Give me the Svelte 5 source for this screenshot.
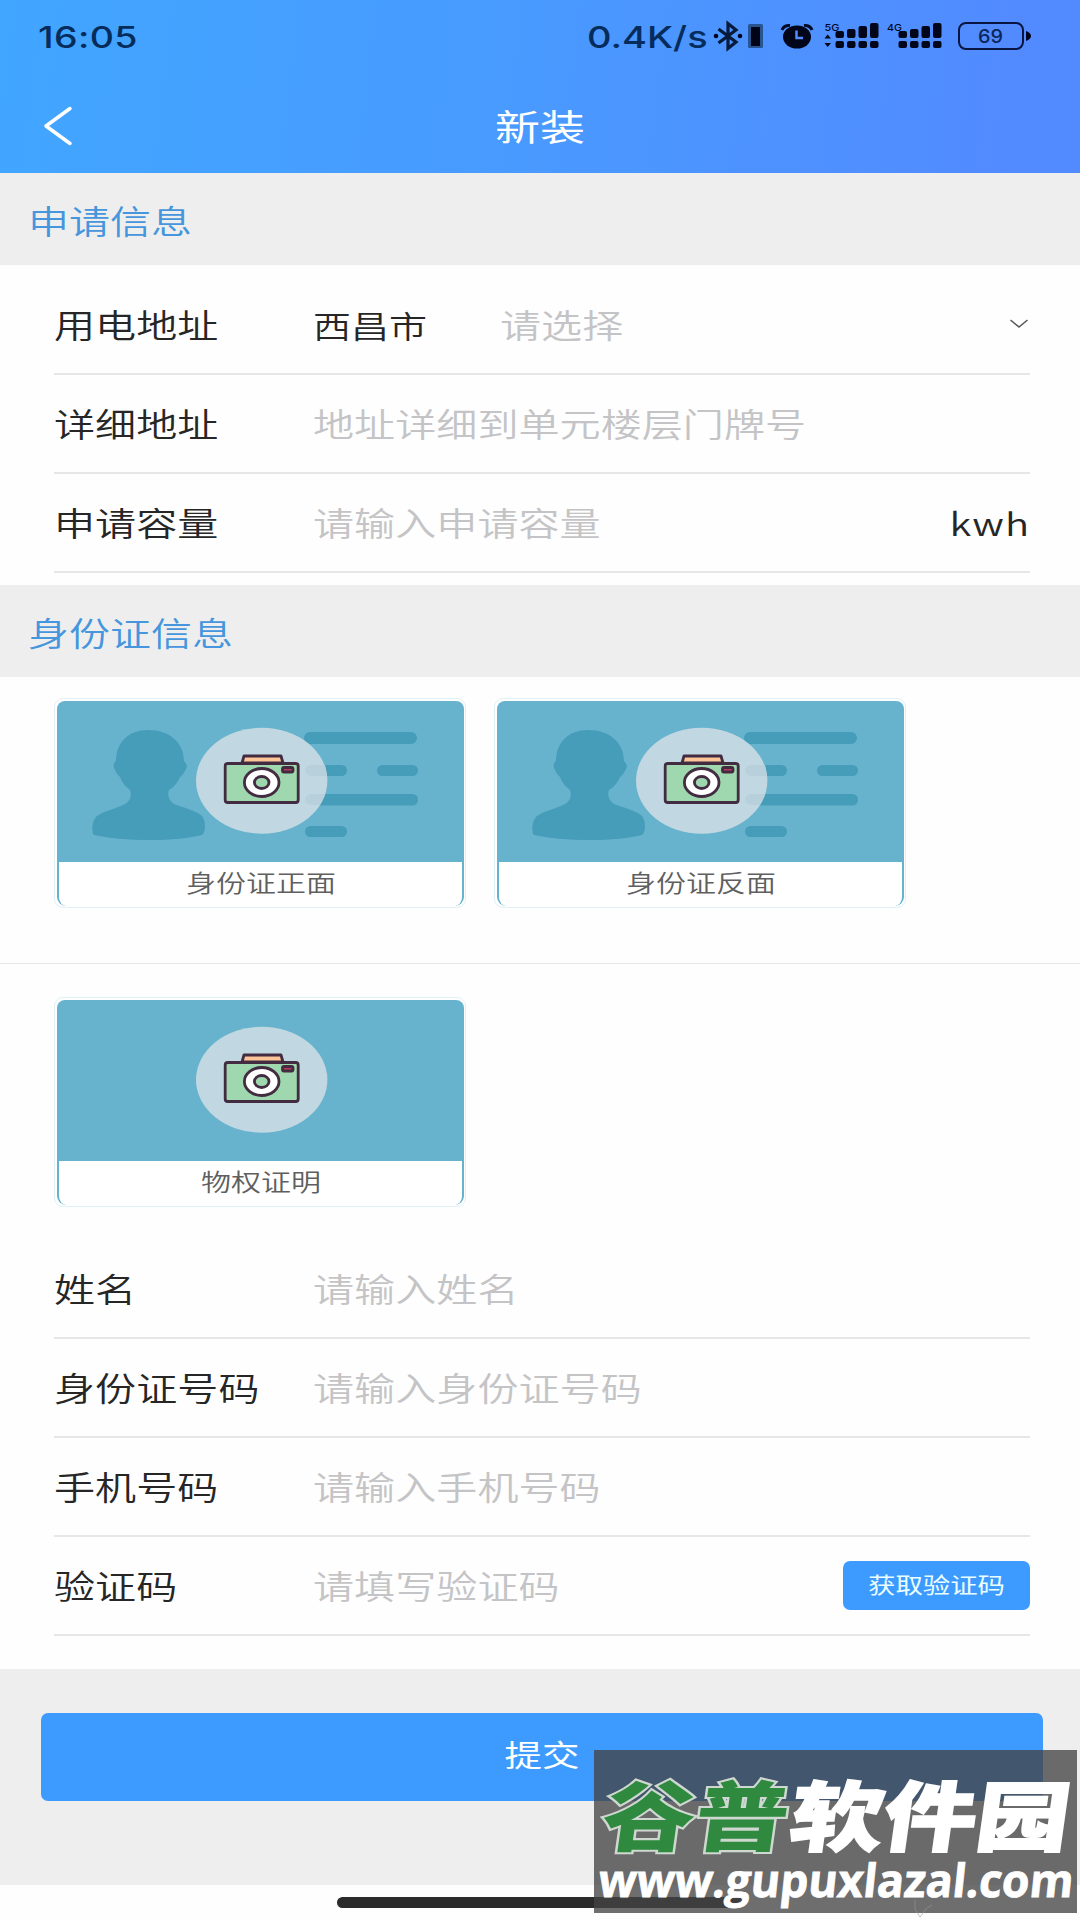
<script lang="ts">
    type Field = {
        key: string;
        label: string;
        placeholder: string;
        unit?: string;
        code?: boolean;
    }

    let city: string = "西昌市";
    let form: Record<string, string> = {};

    const addressFields: Field[] = [
        { key: "address", label: "详细地址", placeholder: "地址详细到单元楼层门牌号" },
        { key: "capacity", label: "申请容量", placeholder: "请输入申请容量", unit: "kwh" },
    ];

    const personFields: Field[] = [
        { key: "name", label: "姓名", placeholder: "请输入姓名" },
        { key: "idNumber", label: "身份证号码", placeholder: "请输入身份证号码" },
        { key: "phone", label: "手机号码", placeholder: "请输入手机号码" },
        { key: "code", label: "验证码", placeholder: "请填写验证码", code: true },
    ];

    const signalBars = [
        { x: 0, y: 31 },
        { x: 11.5, y: 29 },
        { x: 23, y: 26 },
        { x: 34.5, y: 23 },
    ];
</script>

{#snippet signal(left: number)}
    {#each signalBars as bar}
        <rect x={left + bar.x} y={bar.y} width="8.5" height={38 - bar.y} rx="2" />
        <rect x={left + bar.x} y="41" width="8.5" height="7" rx="2" />
    {/each}
{/snippet}

{#snippet uploadCard(caption: string, person: boolean)}
    <button class="card">
        <svg class="cardArt" viewBox="0 0 407 161" width="407" height="161">
            {#if person}
                <g fill="#469db9">
                    <path d="M91 29C72 29 59 41 59 60C56 62 56 66 58 69C59 72 61 74 63 76C65 82 69 86 73 89C75 95 73 100 68 103C61 107 47 110 40 115C35 119 34 131 37 134C50 137 72 139 93 139C113 139 134 137 145 134C149 131 149 120 145 115C140 110 125 106 117 103C112 100 110 94 112 89C117 86 121 81 123 76C125 75 127 72 129 68C131 65 129 62 127 60C127 41 112 29 91 29Z" />
                    <rect x="247" y="31" width="113" height="12" rx="6" />
                    <rect x="248" y="64" width="42" height="11" rx="5.5" />
                    <rect x="320" y="64" width="41" height="11" rx="5.5" />
                    <rect x="248" y="93" width="113" height="11.500" rx="5.5" />
                    <rect x="248" y="125" width="42" height="11" rx="5.5" />
                </g>
            {/if}
            <ellipse cx="204.700" cy="79.700" rx="65.700" ry="53" fill="#c1d7e1" />
            {#if person}
                <g fill="#b7d0db">
                    <path d="M254 64H268L270 75H254Q248 74 248 69Q249 65 254 64Z" />
                    <path d="M254 93H268L263 104H254Q248 103 248 98Q249 94 254 93Z" />
                </g>
            {/if}
            <g stroke="#432c42" stroke-width="2.800" stroke-linejoin="round">
                <path d="M185 62L187 55H224L226 62Z" fill="#fcc598" />
                <rect x="168.200" y="62.500" width="73" height="39" rx="2.500" fill="#9fd7ae" />
                <ellipse cx="204.700" cy="81.500" rx="17.300" ry="14" fill="#fff" />
                <ellipse cx="204.700" cy="81.500" rx="7.300" ry="6" fill="#9fd7ae" />
                <rect x="225.500" y="66.500" width="10.500" height="4.500" rx="1.500" fill="#b93a5c" />
            </g>
        </svg>
        <span class="caption"><span class="flat">{caption}</span></span>
    </button>
{/snippet}

{#snippet fieldRow(field: Field)}
    <label class="row">
        <span class="label flat">{field.label}</span>
        <input class="flat" type="text" placeholder={field.placeholder} bind:value={form[field.key]} />
        {#if field.unit}
            <span class="unit flat">{field.unit}</span>
        {/if}
        {#if field.code}
            <button class="codeButton"><span class="flat">获取验证码</span></button>
        {/if}
    </label>
{/snippet}

<main class="page">
    <header>
        <div class="statusBar">
            <span class="time flat">16:05</span>
            <span class="speed flat">0.4K/s</span>
            <svg class="statusIcons" viewBox="712 0 322 72" width="322" height="72" fill="#02061a">
                <path d="M718.500 29L736 42L728 48.500V23.500L736 30L718.500 43" fill="none" stroke="#071a3a" stroke-width="3.200" />
                <circle cx="716" cy="36" r="2.300" />
                <circle cx="740" cy="36" r="2.300" />
                <rect x="748" y="24" width="15" height="24" rx="1.500" fill="#28548f" />
                <rect x="751" y="27" width="9" height="19" fill="#000416" />
                <ellipse cx="797" cy="37" rx="14" ry="11.500" />
                <path d="M782 30Q784 25 790 25.500M812 30Q810 25 804 25.500" fill="none" stroke="#050b24" stroke-width="3" />
                <path d="M796.500 30.500V38H803" fill="none" stroke="#548dfb" stroke-width="2.500" />
                <text x="824.500" y="31" font-size="9.500" textLength="15" lengthAdjust="spacingAndGlyphs">5G</text>
                <path d="M824.500 38.500L827.700 34.500L831 38.500ZM824.500 43L827.700 47L831 43Z" />
                {@render signal(835.5)}
                <text x="887" y="31" font-size="9.500" textLength="15" lengthAdjust="spacingAndGlyphs">4G</text>
                {@render signal(898.5)}
                <rect x="959" y="23" width="64" height="26" rx="7" fill="none" stroke="#0a1440" stroke-width="2" />
                <path d="M1026 31Q1031 33 1031 36Q1031 39 1026 41Z" />
                <text x="978" y="42.500" font-size="18" font-weight="500" textLength="25" lengthAdjust="spacingAndGlyphs" fill="#0c2458">69</text>
            </svg>
        </div>
        <div class="titleBar">
            <svg class="back" viewBox="0 0 30 40" width="30" height="40">
                <path d="M27 2.500L3 20L27 37.500" fill="none" stroke="#fff" stroke-width="3.500" stroke-linecap="round" stroke-linejoin="round" />
            </svg>
            <h1 class="flat">新装</h1>
        </div>
    </header>

    <h2><span class="flat">申请信息</span></h2>
    <section class="fields first">
        <div class="row">
            <span class="label flat">用电地址</span>
            <span class="city flat">{city}</span>
            <input class="flat" type="text" placeholder="请选择" bind:value={form.area} />
            <svg class="chevron" viewBox="0 0 20 10" width="20" height="10">
                <path d="M1.500 1L10 8L18.500 1" fill="none" stroke="#555" stroke-width="1.500" />
            </svg>
        </div>
        {#each addressFields as field}
            {@render fieldRow(field)}
        {/each}
    </section>

    <h2><span class="flat">身份证信息</span></h2>
    <section class="cards idCards">
        {@render uploadCard("身份证正面", true)}
        {@render uploadCard("身份证反面", true)}
    </section>
    <section class="cards">
        {@render uploadCard("物权证明", false)}
    </section>

    <section class="fields">
        {#each personFields as field}
            {@render fieldRow(field)}
        {/each}
    </section>

    <footer>
        <button class="submit"><span class="flat">提交</span></button>
    </footer>
    <div class="homeArea"><div class="homeBar"></div></div>

    <!-- site badge over the bottom corner -->
    <svg class="badge" viewBox="594 1750 486 170" width="486" height="170">
        <rect x="594" y="1750" width="483" height="163" fill="#444" fill-opacity="0.775" />
        <g class="badgeName" transform="translate(0 1845) skewX(-8) scale(1 0.82)">
            <text class="green" x="599" y="0" textLength="186" lengthAdjust="spacingAndGlyphs">谷普</text>
            <text class="white" x="787" y="0" textLength="279" lengthAdjust="spacingAndGlyphs">软件园</text>
        </g>
        <g transform="translate(0 1897) skewX(-6)">
            <text class="badgeUrl" x="597" y="0" textLength="475" lengthAdjust="spacingAndGlyphs">www.gupuxlazal.com</text>
        </g>
        <path d="M915 1900V1909L920 1917L926 1909L932 1905" fill="none" stroke="#999" stroke-width="0.600" />
    </svg>
</main>

<style>
    :global(body) {
        margin: 0;
        background: #fff;
    }
    .page {
        position: relative;
        width: 1080px;
        height: 1920px;
        overflow: hidden;
        background: #fefefe;
        font-family: "Noto Sans CJK SC", sans-serif;
        color: #262626;
    }
    button {
        border: none;
        padding: 0;
        font-family: inherit;
    }
    /* wide lettering used all over the app */
    .flat {
        display: inline-block;
        transform: scaleY(0.8);
        white-space: nowrap;
    }

    header {
        height: 173px;
        background: linear-gradient(97deg, #41a6ff 0%, #489bff 45%, #528aff 95%);
    }
    .statusBar {
        display: flex;
        align-items: center;
        height: 72px;
        padding-left: 38px;
        font-family: Inter, sans-serif;
        font-weight: 500;
        color: #062c5c;
    }
    .time {
        width: 549px;
        padding-top: 2px;
        font-size: 37.5px;
        letter-spacing: 0.4px;
    }
    .speed {
        width: 125px;
        padding-top: 2px;
        font-size: 38px;
    }
    .titleBar {
        display: grid;
        grid-template-columns: 200px 1fr 200px;
        align-items: center;
        height: 107px;
    }
    .back {
        margin-left: 43px;
    }
    h1 {
        margin: 0;
        font-size: 45px;
        font-weight: 400;
        line-height: 60px;
        text-align: center;
        color: #fff;
    }

    h2 {
        display: flex;
        align-items: center;
        height: 92px;
        margin: 0;
        padding: 1px 0 0 28px;
        box-sizing: border-box;
        background: #eee;
        font-size: 41px;
        font-weight: 350;
        color: #4596dc;
    }

    .fields {
        padding: 0 50px 33px 54px;
    }
    .fields.first {
        padding: 11px 50px 12px 54px;
    }
    .row {
        display: flex;
        align-items: center;
        height: 99px;
        box-sizing: border-box;
        border-bottom: 2px solid #e7e7e7;
        padding-bottom: 1px;
        font-size: 41.1px;
        font-weight: 350;
    }
    .label {
        width: 259px;
    }
    .city {
        width: 187px;
        font-size: 38px;
    }
    input {
        flex: 1;
        min-width: 0;
        height: 60px;
        border: none;
        outline: none;
        padding: 0;
        background: none;
        font: inherit;
        color: #262626;
    }
    input::placeholder {
        color: #c4c4c6;
        opacity: 1;
    }
    .unit {
        font-size: 40px;
        letter-spacing: 1px;
    }
    .chevron {
        margin: 0 1px 0 0;
    }
    .codeButton {
        width: 187px;
        height: 49px;
        padding-bottom: 3px;
        border-radius: 7px;
        background: #3d9aff;
        color: #eaffff;
        font-size: 27.4px;
        line-height: 43px;
    }

    .cards {
        display: flex;
        gap: 28px;
        padding: 33px 54px;
    }
    .idCards {
        height: 210px;
        padding: 21px 54px 55px;
        border-bottom: 1px solid #e6e6e6;
    }
    .card {
        width: 412px;
        height: 210px;
        box-sizing: border-box;
        border: 1px solid #dff1f5;
        border-radius: 9px;
        padding: 2px 1px 1px;
        background: #fff;
    }
    .cardArt {
        display: block;
        margin: 0 auto;
        border-radius: 8px 8px 0 0;
        background: #67b3cd;
    }
    .caption {
        display: block;
        width: 407px;
        height: 44px;
        margin: 0 auto;
        padding-left: 2px;
        box-sizing: border-box;
        border: solid #67b3cd;
        border-width: 0 2.5px;
        border-radius: 0 0 9px 9px;
        font-size: 30px;
        font-weight: 350;
        line-height: 41px;
        color: #5f5f5f;
    }

    footer {
        height: 216px;
        box-sizing: border-box;
        padding: 44px 37px 0 41px;
        background: #eee;
    }
    .submit {
        width: 100%;
        height: 88px;
        padding-bottom: 9px;
        border-radius: 7px;
        background: #3d9aff;
        color: #fff;
        font-size: 37.5px;
        line-height: 77px;
    }
    .homeArea {
        display: flex;
        justify-content: center;
        padding-top: 12px;
    }
    .homeBar {
        width: 406px;
        height: 11px;
        border-radius: 6px;
        background: #2b2b2b;
    }

    .badge {
        position: absolute;
        right: 0;
        bottom: 0;
    }
    .badgeName {
        font-size: 93px;
        font-weight: 900;
    }
    .green {
        fill: #2f8a40;
        stroke: #cfd8d0;
        stroke-width: 5px;
        paint-order: stroke;
    }
    .white {
        fill: #fff;
        stroke: #fff;
        stroke-width: 2px;
    }
    .badgeUrl {
        font-family: "Open Sans", sans-serif;
        font-size: 46px;
        font-weight: 700;
        fill: #fff;
        stroke: #fff;
        stroke-width: 0.8px;
    }
</style>
